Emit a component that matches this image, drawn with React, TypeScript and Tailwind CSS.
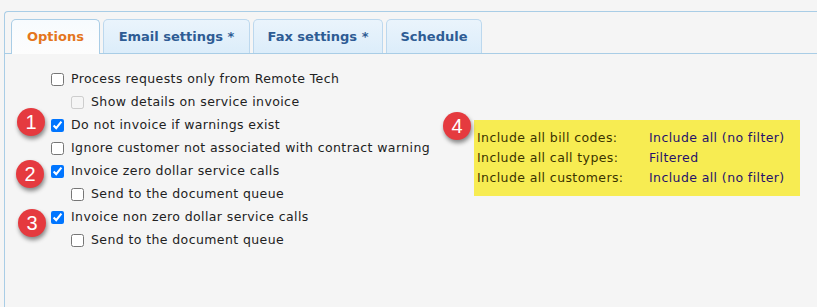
import React from "react";

const Badge = ({ n }: { n: string }) => (
  <div className="w-[28px] h-[28px] rounded-full bg-[#e53a3f] text-white flex items-center justify-center text-[20px] shadow-[1px_3px_4px_rgba(0,0,0,0.45)] [font-family:'Liberation_Sans',Arial,sans-serif] tracking-normal">
    {n}
  </div>
);

const Row = ({
  label,
  checked,
  indent,
  disabled,
  badge,
  badgeTop,
}: {
  label: string;
  checked?: boolean;
  indent?: boolean;
  disabled?: boolean;
  badge?: string;
  badgeTop?: string;
}) => (
  <div className={`relative flex items-center h-[23px] ${indent ? "pl-[65px]" : "pl-[45px]"}`}>
    {badge && (
      <div className={`absolute ${badgeTop}`}>
        <Badge n={badge} />
      </div>
    )}
    <input
      type="checkbox"
      defaultChecked={checked}
      disabled={disabled}
      className="m-0 w-[13px] h-[13px] ml-[1px]"
    />
    <span className="ml-[7px] text-[#222]">{label}</span>
  </div>
);

export default function App() {
  return (
    <div className="w-[817px] h-[307px] bg-[#f5f5f5] pt-[11px] pl-[4px] overflow-hidden [font-family:'DejaVu_Sans',Verdana,sans-serif] text-[12.5px] tracking-[0.4px]">
      <div className="h-[320px] border border-[#a9cde6] border-r-0 rounded-tl-[4px] bg-[#f5f5f5]">
        <div className="flex items-end gap-[3px] pl-[6px] pt-[7px] border-b border-[#a9cde6] h-[42px] tracking-normal">
          <div className="h-[35px] w-[89px] flex items-center justify-center border border-[#a9cde6] border-b-0 rounded-t-[5px] bg-gradient-to-b from-[#f7fbfe] to-[#fdfdfd] text-[#e4761d] font-bold text-[13px] mb-[-1px] pb-[1px]">
            Options
          </div>
          <div className="h-[34px] w-[147px] flex items-center justify-center border border-[#bcd8ee] border-b-0 rounded-t-[5px] bg-gradient-to-b from-[#eaf4fc] to-[#dcedfa] text-[#2e5c94] font-bold text-[13px]">
            Email settings *
          </div>
          <div className="h-[34px] w-[130px] flex items-center justify-center border border-[#bcd8ee] border-b-0 rounded-t-[5px] bg-gradient-to-b from-[#eaf4fc] to-[#dcedfa] text-[#2e5c94] font-bold text-[13px]">
            Fax settings *
          </div>
          <div className="h-[34px] w-[96px] flex items-center justify-center border border-[#bcd8ee] border-b-0 rounded-t-[5px] bg-gradient-to-b from-[#eaf4fc] to-[#dcedfa] text-[#2e5c94] font-bold text-[13px]">
            Schedule
          </div>
        </div>
        <div className="flex pt-[14px]">
          <div className="w-[469px]">
            <Row label="Process requests only from Remote Tech" />
            <Row label="Show details on service invoice" indent disabled />
            <Row label="Do not invoice if warnings exist" checked badge="1" badgeTop="left-[12px] top-[-6px]" />
            <Row label="Ignore customer not associated with contract warning" />
            <Row label="Invoice zero dollar service calls" checked badge="2" badgeTop="left-[11px] top-[0px]" />
            <Row label="Send to the document queue" indent />
            <Row label="Invoice non zero dollar service calls" checked badge="3" badgeTop="left-[13px] top-[3px]" />
            <Row label="Send to the document queue" indent />
          </div>
          <div className="relative mt-[52px]">
            <div className="absolute left-[-31px] top-[-8px]">
              <Badge n="4" />
            </div>
            <div className="w-[326px] h-[76px] bg-[#f7ec52] pl-[3px] pt-[8px] leading-[20px]">
              <div className="flex">
                <span className="w-[172px] text-[#3b3300]">Include all bill codes:</span>
                <span className="text-[#26116b]">Include all (no filter)</span>
              </div>
              <div className="flex">
                <span className="w-[172px] text-[#3b3300]">Include all call types:</span>
                <span className="text-[#26116b]">Filtered</span>
              </div>
              <div className="flex">
                <span className="w-[172px] text-[#3b3300]">Include all customers:</span>
                <span className="text-[#26116b]">Include all (no filter)</span>
              </div>
            </div>
          </div>
        </div>
      </div>
    </div>
  );
}
